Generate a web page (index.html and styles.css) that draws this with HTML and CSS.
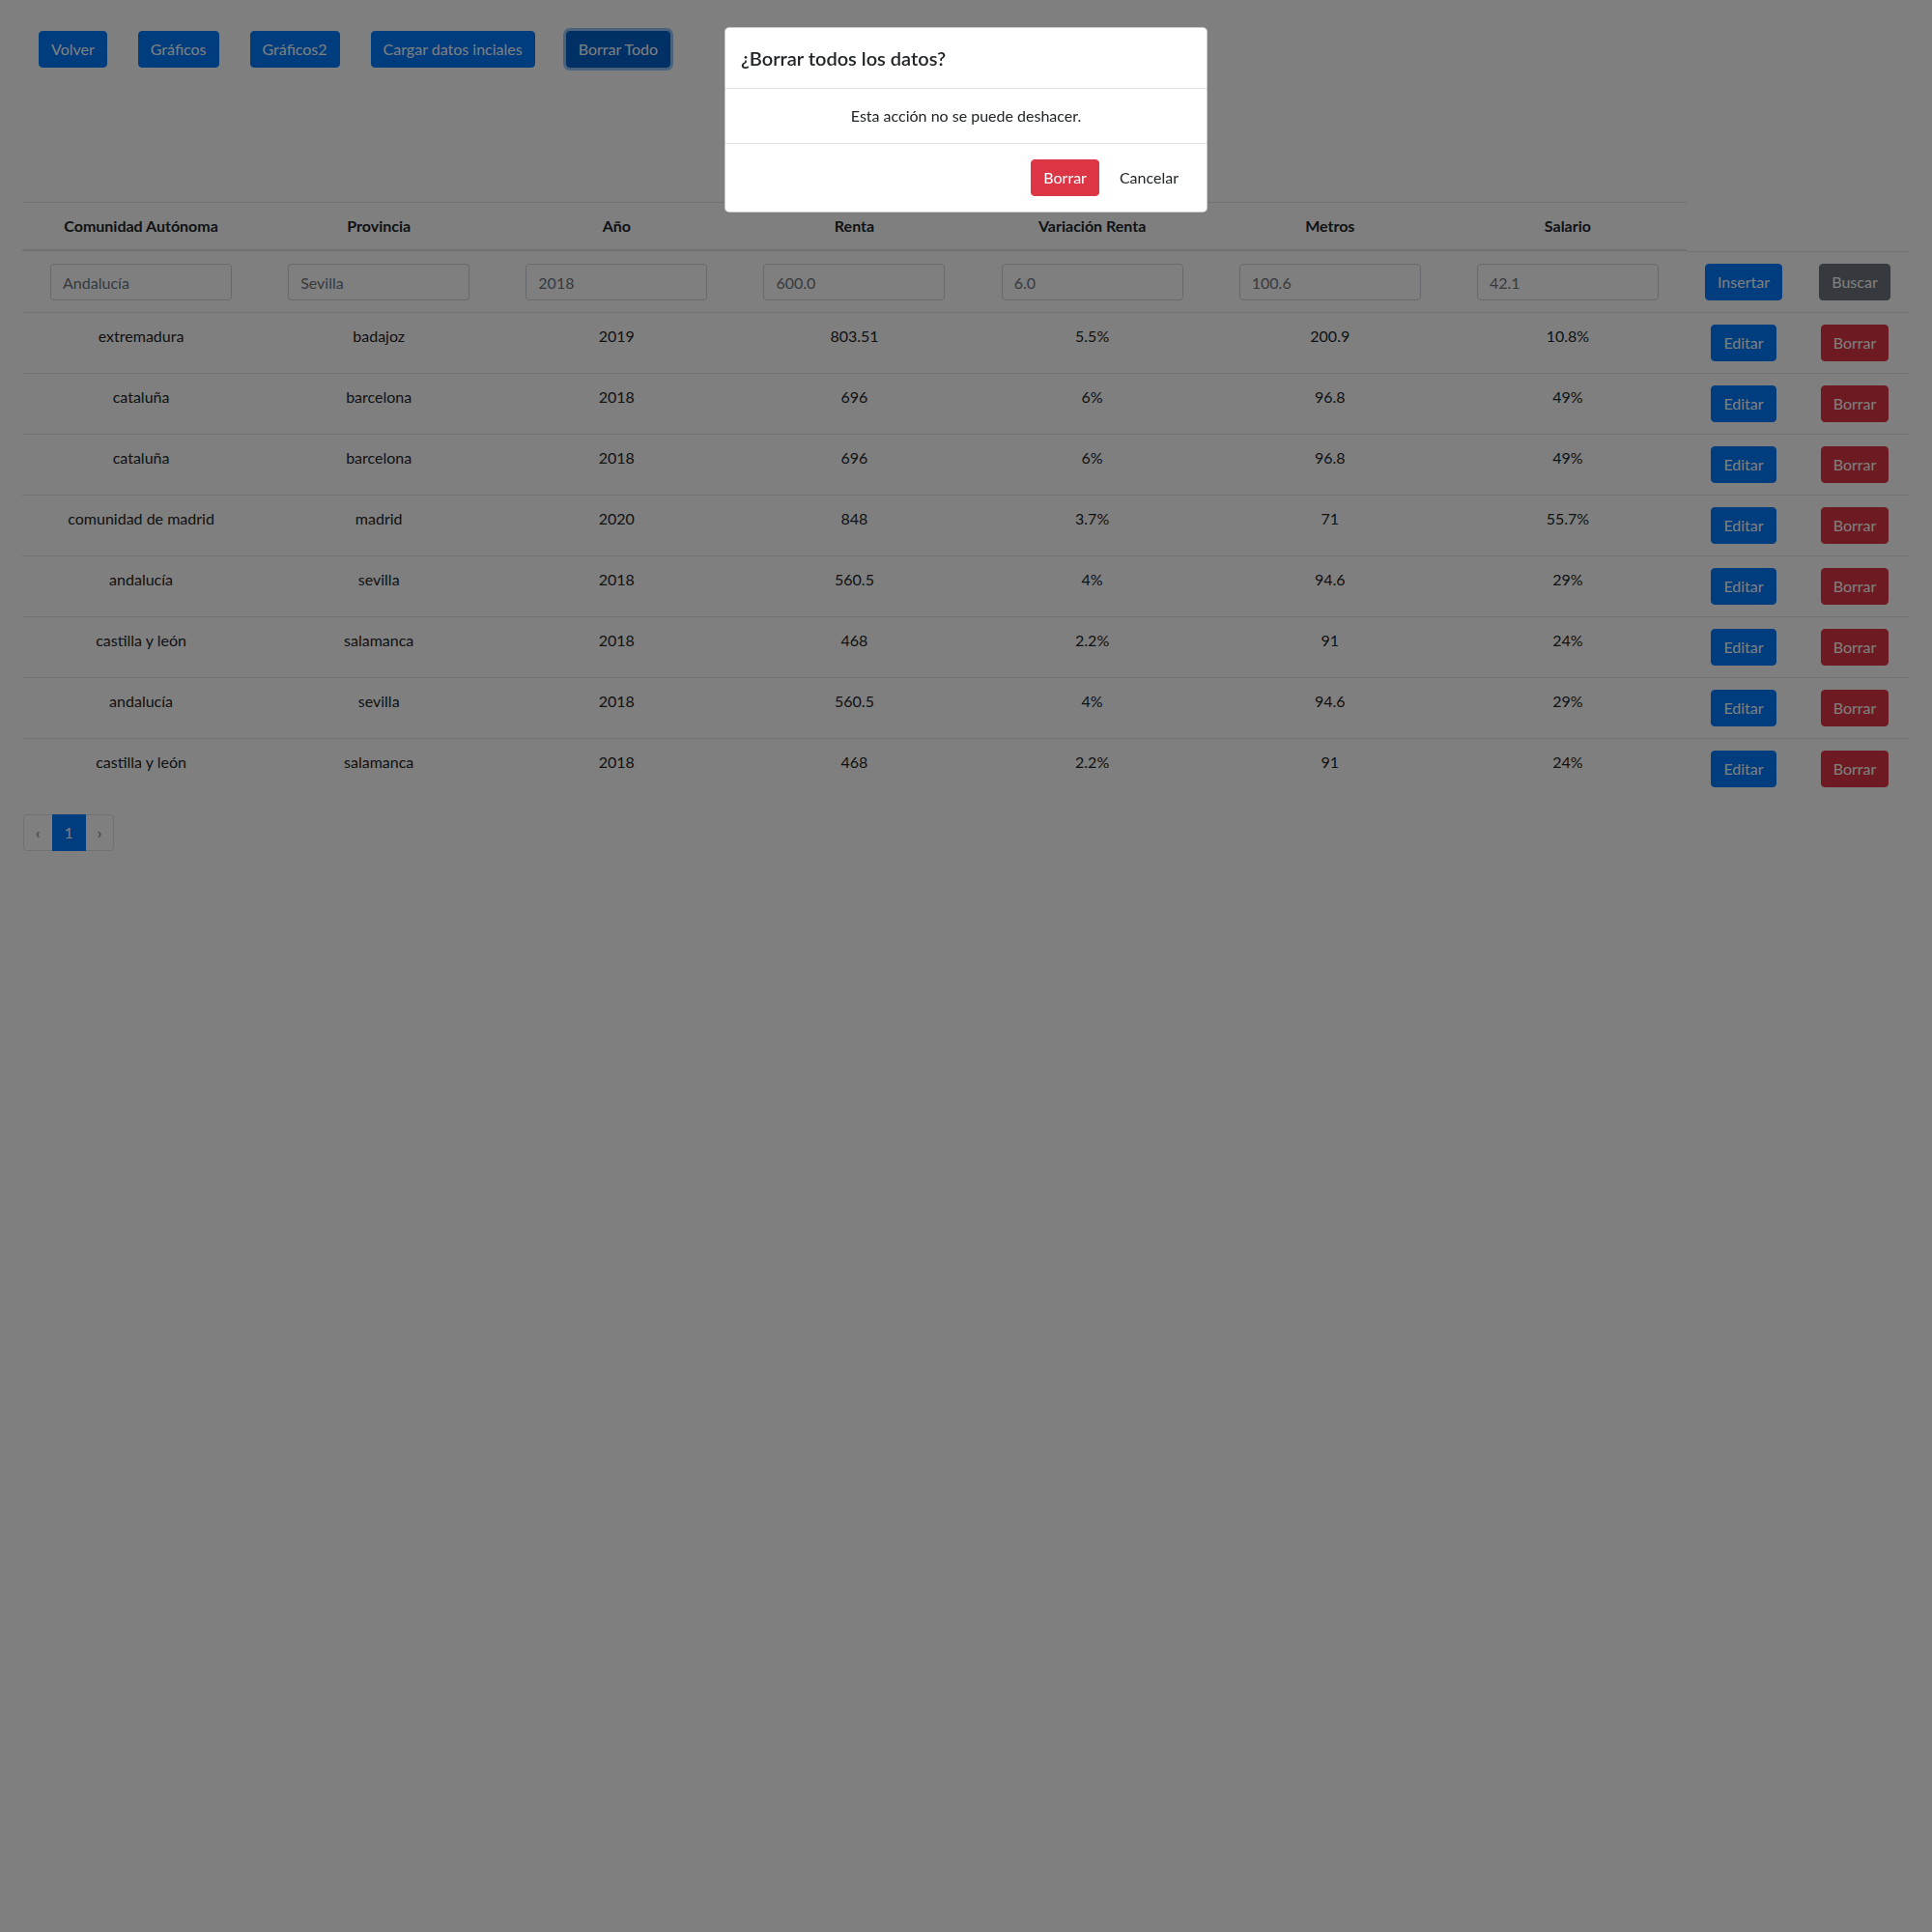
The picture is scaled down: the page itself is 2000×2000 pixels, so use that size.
FILE: index.html
```html
<!DOCTYPE html>
<html lang="es">
<head>
<meta charset="utf-8">
<title>Datos</title>
<link rel="stylesheet" href="styles.css">
</head>
<body>
<div class="page">
  <div class="toolbar">
    <button class="btn btn-primary">Volver</button>
    <button class="btn btn-primary">Gráficos</button>
    <button class="btn btn-primary">Gráficos2</button>
    <button class="btn btn-primary">Cargar datos inciales</button>
    <button class="btn btn-primary is-focused">Borrar Todo</button>
  </div>

  <table class="data-table">
    <colgroup>
      <col class="c-data"><col class="c-data"><col class="c-data"><col class="c-data"><col class="c-data"><col class="c-data"><col class="c-data">
      <col class="c-act1"><col class="c-act2">
    </colgroup>
    <thead>
      <tr>
        <th>Comunidad Autónoma</th>
        <th>Provincia</th>
        <th>Año</th>
        <th>Renta</th>
        <th>Variación Renta</th>
        <th>Metros</th>
        <th>Salario</th>
        <th class="th-empty"></th>
        <th class="th-empty"></th>
      </tr>
    </thead>
    <tbody>
      <tr class="input-row">
        <td><input class="field" placeholder="Andalucía"></td>
        <td><input class="field" placeholder="Sevilla"></td>
        <td><input class="field" placeholder="2018"></td>
        <td><input class="field" placeholder="600.0"></td>
        <td><input class="field" placeholder="6.0"></td>
        <td><input class="field" placeholder="100.6"></td>
        <td><input class="field" placeholder="42.1"></td>
        <td class="td-action"><button class="btn btn-primary">Insertar</button></td>
        <td class="td-action"><button class="btn btn-secondary">Buscar</button></td>
      </tr>
      <tr><td>extremadura</td><td>badajoz</td><td>2019</td><td>803.51</td><td>5.5%</td><td>200.9</td><td>10.8%</td><td><button class="btn btn-primary">Editar</button></td><td><button class="btn btn-danger">Borrar</button></td></tr>
      <tr><td>cataluña</td><td>barcelona</td><td>2018</td><td>696</td><td>6%</td><td>96.8</td><td>49%</td><td><button class="btn btn-primary">Editar</button></td><td><button class="btn btn-danger">Borrar</button></td></tr>
      <tr><td>cataluña</td><td>barcelona</td><td>2018</td><td>696</td><td>6%</td><td>96.8</td><td>49%</td><td><button class="btn btn-primary">Editar</button></td><td><button class="btn btn-danger">Borrar</button></td></tr>
      <tr><td>comunidad de madrid</td><td>madrid</td><td>2020</td><td>848</td><td>3.7%</td><td>71</td><td>55.7%</td><td><button class="btn btn-primary">Editar</button></td><td><button class="btn btn-danger">Borrar</button></td></tr>
      <tr><td>andalucía</td><td>sevilla</td><td>2018</td><td>560.5</td><td>4%</td><td>94.6</td><td>29%</td><td><button class="btn btn-primary">Editar</button></td><td><button class="btn btn-danger">Borrar</button></td></tr>
      <tr><td>castilla y león</td><td>salamanca</td><td>2018</td><td>468</td><td>2.2%</td><td>91</td><td>24%</td><td><button class="btn btn-primary">Editar</button></td><td><button class="btn btn-danger">Borrar</button></td></tr>
      <tr><td>andalucía</td><td>sevilla</td><td>2018</td><td>560.5</td><td>4%</td><td>94.6</td><td>29%</td><td><button class="btn btn-primary">Editar</button></td><td><button class="btn btn-danger">Borrar</button></td></tr>
      <tr><td>castilla y león</td><td>salamanca</td><td>2018</td><td>468</td><td>2.2%</td><td>91</td><td>24%</td><td><button class="btn btn-primary">Editar</button></td><td><button class="btn btn-danger">Borrar</button></td></tr>
    </tbody>
  </table>

  <ul class="pagination">
    <li class="page-item disabled"><span class="page-link">‹</span></li>
    <li class="page-item active"><span class="page-link">1</span></li>
    <li class="page-item disabled"><span class="page-link">›</span></li>
  </ul>
</div>

<div class="backdrop"></div>
<div class="modal">
  <div class="modal-content">
    <div class="modal-header">
      <h5 class="modal-title">¿Borrar todos los datos?</h5>
    </div>
    <div class="modal-body">Esta acción no se puede deshacer.</div>
    <div class="modal-footer">
      <button class="btn btn-danger">Borrar</button>
      <button class="btn btn-plain">Cancelar</button>
    </div>
  </div>
</div>
</body>
</html>
```

FILE: styles.css
```css
* { box-sizing: border-box; }

body {
  margin: 0;
  font-family: Lato, "Noto Sans", "Liberation Sans", sans-serif;
  font-size: 16px;
  line-height: 1.5;
  color: #212529;
  background: #fff;
}

.page {
  padding: 32px 24px 0 23px;
}

.toolbar {
  display: flex;
  gap: 32px;
  padding-left: 17px;
}

.btn {
  display: inline-block;
  font-family: inherit;
  font-size: 16px;
  font-weight: 400;
  line-height: 1.5;
  padding: 6px 12px;
  border: 1px solid transparent;
  border-radius: 4px;
  text-align: center;
  cursor: pointer;
  background: transparent;
  color: #212529;
}

.btn-primary { color: #fff; background: #007bff; border-color: #007bff; }
.btn-primary.is-focused {
  background: #0062cc;
  border-color: #005cbf;
  box-shadow: 0 0 0 3px rgba(38, 143, 255, .5);
}
.btn-secondary { color: #fff; background: #6c757d; border-color: #6c757d; }
.btn-danger { color: #fff; background: #dc3545; border-color: #dc3545; }
.btn-plain { color: #212529; background: transparent; }

.data-table {
  margin-top: 139px;
  margin-bottom: 16px;
  width: 1953px;
  border-collapse: separate;
  border-spacing: 0;
  table-layout: fixed;
}

.c-data { width: 246.14px; }
.c-act1 { width: 118px; }
.c-act2 { width: 112px; }

.data-table th,
.data-table td {
  padding: 12px;
  text-align: center;
  vertical-align: top;
}

.data-table td {
  border-top: 1px solid #dee2e6;
}

.data-table thead th {
  vertical-align: bottom;
  border-top: 1px solid #dee2e6;
  border-bottom: 2px solid #dee2e6;
  font-weight: 700;
}

.data-table thead th.th-empty {
  border-top: 0;
  border-bottom: 0;
}

.data-table .input-row td {
  border-top-color: transparent;
}
.data-table .input-row td.td-action {
  border-top-color: #dee2e6;
}

.field {
  display: inline-block;
  width: 188px;
  height: 38px;
  padding: 6px 12px;
  font-family: inherit;
  font-size: 16px;
  line-height: 1.5;
  color: #495057;
  background: #fff;
  border: 1px solid #ced4da;
  border-radius: 4px;
  vertical-align: top;
}
.field::placeholder { color: #6c757d; opacity: 1; }

.pagination {
  display: flex;
  list-style: none;
  margin: 0 0 0 1px;
  padding: 0;
}
.page-link {
  display: block;
  padding: 8px 12px;
  line-height: 1.25;
  margin-left: -1px;
  color: #007bff;
  background: #fff;
  border: 1px solid #dee2e6;
}
.page-item:first-child .page-link { margin-left: 0; border-radius: 4px 0 0 4px; }
.page-item:last-child .page-link { border-radius: 0 4px 4px 0; }
.page-item.disabled .page-link { color: #6c757d; }
.page-item.active .page-link {
  position: relative;
  color: #fff;
  background: #007bff;
  border-color: #007bff;
}

.backdrop {
  position: fixed;
  inset: 0;
  background: rgba(0, 0, 0, .5);
}

.modal {
  position: fixed;
  top: 28px;
  left: 50%;
  width: 500px;
  margin-left: -250px;
}

.modal-content {
  background: #fff;
  border: 1px solid rgba(0, 0, 0, .2);
  border-radius: 5px;
}

.modal-header {
  padding: 16px;
  border-bottom: 1px solid #dee2e6;
}

.modal-title {
  margin: 0;
  font-size: 20px;
  font-weight: 600;
  line-height: 1.5;
}

.modal-body {
  padding: 16px;
  text-align: center;
}

.modal-footer {
  display: flex;
  justify-content: flex-end;
  align-items: center;
  gap: 8px;
  padding: 16px;
  border-top: 1px solid #dee2e6;
}
```
